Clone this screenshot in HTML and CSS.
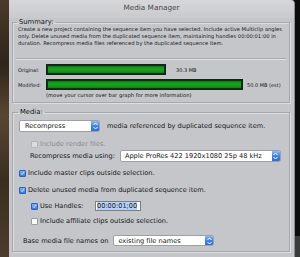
FILE: index.html
```html
<!DOCTYPE html>
<html lang="en">
<head>
  <meta charset="UTF-8" />
  <title>Media Manager</title>
  <link rel="stylesheet" href="styles.css">
</head>
<body>
  <div id="screen">
    <div class="desk-left"></div>

    <div id="window">
      <div class="titlebar">Media Manager</div>

      <fieldset class="group summary">
        <legend>Summary:</legend>
        <p class="desc">Create a new project containing the sequence item you have selected. Include active Multiclip angles<br>only. Delete unused media from the duplicated sequence item, maintaining handles 00:00:01:00 in<br>duration. Recompress media files referenced by the duplicated sequence item.</p>
        <div class="sep"></div>

        <div class="bar-row">
          <span class="bar-label">Original:</span>
          <div class="bar" style="width: 120px"></div>
          <span class="bar-size gap-orig">30.3 MB</span>
        </div>
        <div class="bar-row">
          <span class="bar-label">Modified:</span>
          <div class="bar" style="width: 197px"></div>
          <span class="bar-size">50.0 MB (est)</span>
        </div>
        <div class="note">(move your cursor over bar graph for more information)</div>
      </fieldset>

      <fieldset class="group media">
        <legend>Media:</legend>

        <div class="row r1">
          <div class="popup p-recompress">
            <span>Recompress</span>
            <span class="stepper"><svg width="5" height="8" viewBox="0 0 5 8"><path d="M0.5 3 L2.5 1 L4.5 3 M0.5 5 L2.5 7 L4.5 5" fill="none" stroke="#fff" stroke-width="1"/></svg></span>
          </div>
          <span class="after-popup">media referenced by duplicated sequence item.</span>
        </div>

        <div class="row r2 indent">
          <span class="check disabled"></span>
          <span class="muted">Include render files.</span>
        </div>

        <div class="row r3">
          <span class="using-label">Recompress media using:</span>
          <div class="popup p-codec">
            <span>Apple ProRes 422 1920x1080 25p 48 kHz</span>
            <span class="stepper"><svg width="5" height="8" viewBox="0 0 5 8"><path d="M0.5 3 L2.5 1 L4.5 3 M0.5 5 L2.5 7 L4.5 5" fill="none" stroke="#fff" stroke-width="1"/></svg></span>
          </div>
        </div>

        <div class="row r4">
          <span class="check on"><svg width="8" height="8" viewBox="0 0 8 8"><path d="M2 4.2 L3.4 5.8 L6 2" fill="none" stroke="#fff" stroke-width="1.2"/></svg></span>
          <span>Include master clips outside selection.</span>
        </div>

        <div class="row r5">
          <span class="check on"><svg width="8" height="8" viewBox="0 0 8 8"><path d="M2 4.2 L3.4 5.8 L6 2" fill="none" stroke="#fff" stroke-width="1.2"/></svg></span>
          <span>Delete unused media from duplicated sequence item.</span>
        </div>

        <div class="row r6 indent">
          <span class="check on"><svg width="8" height="8" viewBox="0 0 8 8"><path d="M2 4.2 L3.4 5.8 L6 2" fill="none" stroke="#fff" stroke-width="1.2"/></svg></span>
          <span class="handles-label">Use Handles:</span>
          <div class="field"><span class="selected">00:00:01;00</span></div>
        </div>

        <div class="row r7 indent">
          <span class="check"></span>
          <span>Include affiliate clips outside selection.</span>
        </div>

        <div class="row r8">
          <span class="base-label">Base media file names on</span>
          <div class="popup p-names">
            <span>existing file names</span>
            <span class="stepper"><svg width="5" height="8" viewBox="0 0 5 8"><path d="M0.5 3 L2.5 1 L4.5 3 M0.5 5 L2.5 7 L4.5 5" fill="none" stroke="#fff" stroke-width="1"/></svg></span>
          </div>
        </div>
      </fieldset>
    </div>

    <div class="desk-right"></div>
  </div>
</body>
</html>
```

FILE: styles.css
```css
body {
  margin: 0;
  padding: 0;
  background: #111;
  font-family: 'DejaVu Sans', 'Liberation Sans', sans-serif;
  color: #151515;
  overflow: hidden;
}

#screen {
  display: flex;
  width: 300px;
  height: 257px;
  overflow: hidden;
}

.desk-left {
  width: 9px;
  flex: none;
  background: linear-gradient(to bottom, #4a3a29 0%, #2f251b 25%, #5a4632 45%, #3a2e21 70%, #4c3c2b 100%);
}

.desk-right {
  flex: 1;
  background: linear-gradient(to bottom, #0c0c0c 0, #0c0c0c 236px, #3a3a3a 236px);
}

#window {
  width: 286px;
  flex: none;
  height: 262px;
  background: #c5c6ca;
  border-right: 1px solid #8d8e92;
  border-radius: 0 4px 0 0;
  box-sizing: border-box;
}

.titlebar {
  height: 18px;
  line-height: 16px;
  text-align: center;
  font-size: 7.3px;
  color: #4a4a4a;
  background: linear-gradient(to bottom, #d7d7d9, #c9cacd);
  border-radius: 0 4px 0 0;
}

.group {
  margin: 0 4px 0 3px;
  padding: 0 5px 3px 5px;
  border: 1px solid #a7a8ac;
  box-shadow: inset 1px 1px 0 #dcdde0, 1px 1px 0 #dcdde0;
  min-width: 0;
}

.group legend {
  padding: 0 2px;
  margin-left: -1px;
  font-size: 6.8px;
  line-height: 8px;
  height: 8px;
  color: #111;
}

.desc {
  margin: 0;
  font-size: 5.2px;
  line-height: 7px;
  white-space: nowrap;
  color: #1a1a1a;
}

.sep {
  height: 1px;
  margin: 11px -2px 0 -2px;
  background: #a9aaae;
  border-bottom: 1px solid #dfe0e3;
}

.bar-row {
  display: flex;
  align-items: center;
  height: 11px;
  margin-top: 4px;
  font-size: 5px;
}

.bar-row:first-of-type {
  margin-top: 5px;
}

.bar-label {
  width: 28px;
  flex: none;
}

.bar {
  height: 11px;
  box-sizing: border-box;
  border: 1px solid #1c1c1c;
  background: linear-gradient(to bottom, #0b560c 0%, #179a1e 30%, #18a420 55%, #0d7412 100%);
  box-shadow: inset 0 0 0 1px #06380a;
}

.bar-size {
  margin-left: 4px;
}

.bar-size.gap-orig {
  margin-left: 10px;
}

.note {
  margin: 2px 0 0 28px;
  font-size: 5.2px;
  line-height: 7px;
}

.media {
  margin-top: 5px;
  padding-left: 6px;
  padding-bottom: 5px;
}

.row {
  display: flex;
  align-items: center;
  height: 10px;
  font-size: 6.6px;
  white-space: nowrap;
}

.indent {
  padding-left: 12px;
}

.r1 { margin-top: 4px; height: 12px; }
.r2 { margin-top: 7px; }
.r3 { margin-top: 1px; height: 12px; }
.r4 { margin-top: 6px; }
.r5 { margin-top: 7px; }
.r6 { margin-top: 6px; }
.r7 { margin-top: 5px; }
.r8 { margin-top: 9px; height: 11px; }

.popup {
  display: flex;
  align-items: center;
  justify-content: space-between;
  height: 100%;
  box-sizing: border-box;
  background: #fff;
  border: 1px solid #a0a0a4;
  border-radius: 2px;
  padding-left: 5px;
  font-size: 6.6px;
  overflow: hidden;
}

.stepper {
  display: flex;
  align-items: center;
  justify-content: center;
  width: 8px;
  height: 100%;
  background: linear-gradient(to bottom, #8cbcf6, #3a84ea 50%, #2a6fdc);
}

.p-recompress { width: 81px; }
.p-codec { width: 161px; margin-left: 5px; padding-left: 4px; }
.p-names { width: 101px; margin-left: 5px; padding-left: 4px; }

.after-popup {
  margin-left: 7px;
}

.using-label {
  margin-left: 11px;
}

.base-label {
  margin-left: 4px;
}

.check {
  width: 7px;
  height: 7px;
  flex: none;
  margin-right: 2px;
  box-sizing: border-box;
  background: #fff;
  border: 1px solid #9c9ca0;
  border-radius: 1px;
  display: flex;
  align-items: center;
  justify-content: center;
}

.check svg {
  width: 7px;
  height: 7px;
}

.check.on {
  background: linear-gradient(to bottom, #7fb3f5, #2f78e6);
  border-color: #2a62c0;
}

.check.disabled {
  background: #dcdcde;
  border-color: #b5b5b8;
}

.muted {
  color: #8a8a8e;
}

.handles-label {
  width: 55px;
}

.field {
  width: 46px;
  height: 10px;
  box-sizing: border-box;
  border: 1px solid #808084;
  background: #fff;
  padding-left: 1px;
  display: flex;
  align-items: center;
}

.selected {
  background: #b4d2f7;
  line-height: 8px;
}
```
